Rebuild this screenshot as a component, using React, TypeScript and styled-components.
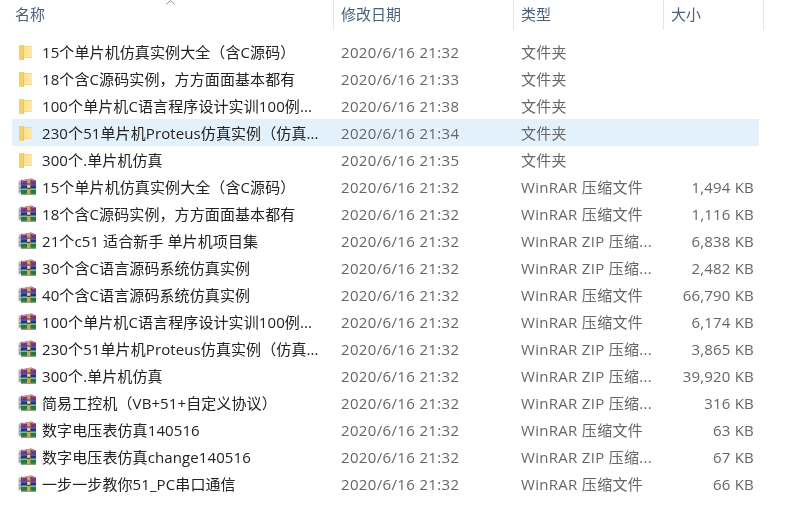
import React from "react";
import styled, { createGlobalStyle } from "styled-components";

const GlobalStyle = createGlobalStyle`
  html, body {
    margin: 0;
    background: #fff;
  }
  body {
    font-family: "Open Sans", "Noto Sans CJK SC", sans-serif;
    font-size: 15px;
    color: #666;
  }
`;

const Wrapper = styled.div`
  width: 803px;
  height: 510px;
  overflow: hidden;
  filter: blur(0.3px);
`;

const Header = styled.div`
  position: relative;
  display: flex;
  height: 30px;
  margin-bottom: 8px;
`;

const HeaderCell = styled.div<{ $width: number; $pad: number }>`
  width: ${(p) => p.$width}px;
  box-sizing: border-box;
  padding-left: ${(p) => p.$pad}px;
  border-right: 1px solid #e5e5e5;
  font-size: 15px;
  line-height: 28px;
  color: #4c607a;
`;

const SortArrow = styled.svg`
  position: absolute;
  left: 165px;
  top: 0;
`;

const Row = styled.div<{ $selected?: boolean }>`
  display: grid;
  grid-template-columns: 321px 180px 150px 96px;
  width: 747px;
  height: 27px;
  margin-left: 12px;
  align-items: center;
  background: ${(p) => (p.$selected ? "#e3f1fc" : "transparent")};
`;

const NameCell = styled.div`
  display: flex;
  align-items: center;
  min-width: 0;
  padding-left: 6px;
`;

const IconSlot = styled.div`
  display: flex;
  width: 24px;
  flex: none;
`;

const Name = styled.span`
  color: #222;
  letter-spacing: 0.1px;
  white-space: nowrap;
`;

const DateCell = styled.div`
  padding-left: 8px;
  letter-spacing: 0.35px;
  white-space: nowrap;
`;

const TypeCell = styled.div`
  padding-left: 8px;
  letter-spacing: 0.3px;
  white-space: nowrap;
`;

const SizeCell = styled.div`
  padding-right: 5px;
  letter-spacing: 0.2px;
  text-align: right;
  white-space: nowrap;
`;

const FolderIcon = () => (
  <svg width="16" height="18" viewBox="0 0 16 18">
    <defs>
      <linearGradient id="folderFront" x1="0" y1="0" x2="1" y2="0">
        <stop offset="0" stopColor="#fbe08c" />
        <stop offset="1" stopColor="#fdeaa8" />
      </linearGradient>
    </defs>
    <path d="M1 2 L6 2 L7 3 L14 3 L14 15 L6 15 L6 17 L2 17 Q1 17 1 16 Z" fill="#f4cf6a" />
    <path d="M5 3.5 L14 3.5 L14 14.5 L7 14.5 L5 16.8 Z" fill="url(#folderFront)" />
    <path d="M5 3.5 L5.8 3.5 L5.8 15.8 L5 16.8 Z" fill="#e9bd55" />
  </svg>
);

const RarIcon = () => (
  <svg width="19" height="17" viewBox="0 0 19 17">
    <path d="M0.5 3 L5 1 L5 15 L0.5 15.5 Z" fill="#b9bcc2" />
    <path d="M1 6 L5 6 M1 10 L5 10 M1 13 L5 13" stroke="#6e7178" strokeWidth="0.8" />
    <path d="M3 2.5 L13 0.5 L18 2.5 L18 6 L3 6 Z" fill="#84326f" />
    <path d="M4 3 L13 1.3 L16.5 2.8" stroke="#d59ac8" strokeWidth="0.9" fill="none" />
    <rect x="3" y="6" width="15" height="4.5" fill="#1f2f92" />
    <path d="M3 7 L18 7" stroke="#6f86df" strokeWidth="0.9" />
    <rect x="3" y="10.5" width="15" height="5" fill="#1f7d34" />
    <path d="M3 11.5 L18 11.5" stroke="#7fcf80" strokeWidth="0.9" />
    <path d="M3 16 L18 16" stroke="#153a1c" strokeWidth="1" />
    <rect x="9" y="1" width="3.5" height="15.5" fill="#c6a469" />
    <path d="M9 6 L12.5 6 M9 10.5 L12.5 10.5" stroke="#5d4528" strokeWidth="1" />
    <rect x="9.8" y="7.3" width="1.9" height="1.9" fill="#f0e6ca" />
  </svg>
);

type FileRow = {
  name: string;
  time: string;
  type: string;
  size?: string;
  folder?: boolean;
  selected?: boolean;
};

const files: FileRow[] = [
  { name: "15个单片机仿真实例大全（含C源码）", time: "21:32", type: "文件夹", folder: true },
  { name: "18个含C源码实例，方方面面基本都有", time: "21:33", type: "文件夹", folder: true },
  { name: "100个单片机C语言程序设计实训100例...", time: "21:38", type: "文件夹", folder: true },
  { name: "230个51单片机Proteus仿真实例（仿真...", time: "21:34", type: "文件夹", folder: true, selected: true },
  { name: "300个.单片机仿真", time: "21:35", type: "文件夹", folder: true },
  { name: "15个单片机仿真实例大全（含C源码）", time: "21:32", type: "WinRAR 压缩文件", size: "1,494 KB" },
  { name: "18个含C源码实例，方方面面基本都有", time: "21:32", type: "WinRAR 压缩文件", size: "1,116 KB" },
  { name: "21个c51 适合新手 单片机项目集", time: "21:32", type: "WinRAR ZIP 压缩...", size: "6,838 KB" },
  { name: "30个含C语言源码系统仿真实例", time: "21:32", type: "WinRAR ZIP 压缩...", size: "2,482 KB" },
  { name: "40个含C语言源码系统仿真实例", time: "21:32", type: "WinRAR 压缩文件", size: "66,790 KB" },
  { name: "100个单片机C语言程序设计实训100例...", time: "21:32", type: "WinRAR 压缩文件", size: "6,174 KB" },
  { name: "230个51单片机Proteus仿真实例（仿真...", time: "21:32", type: "WinRAR ZIP 压缩...", size: "3,865 KB" },
  { name: "300个.单片机仿真", time: "21:32", type: "WinRAR ZIP 压缩...", size: "39,920 KB" },
  { name: "简易工控机（VB+51+自定义协议）", time: "21:32", type: "WinRAR ZIP 压缩...", size: "316 KB" },
  { name: "数字电压表仿真140516", time: "21:32", type: "WinRAR 压缩文件", size: "63 KB" },
  { name: "数字电压表仿真change140516", time: "21:32", type: "WinRAR ZIP 压缩...", size: "67 KB" },
  { name: "一步一步教你51_PC串口通信", time: "21:32", type: "WinRAR 压缩文件", size: "66 KB" },
];

const App = () => {
  return (
    <Wrapper>
      <GlobalStyle />
      <Header>
        <HeaderCell $width={334} $pad={15}>名称</HeaderCell>
        <HeaderCell $width={180} $pad={7}>修改日期</HeaderCell>
        <HeaderCell $width={150} $pad={7}>类型</HeaderCell>
        <HeaderCell $width={100} $pad={7}>大小</HeaderCell>
        <SortArrow width="12" height="5" viewBox="0 0 12 5">
          <path d="M1 4.5 L5.5 0.5 L10 4.5" stroke="#8a8f96" fill="none" />
        </SortArrow>
      </Header>
      {files.map((f, i) => (
        <Row key={i} $selected={f.selected}>
          <NameCell>
            <IconSlot>{f.folder ? <FolderIcon /> : <RarIcon />}</IconSlot>
            <Name>{f.name}</Name>
          </NameCell>
          <DateCell>2020/6/16 {f.time}</DateCell>
          <TypeCell>{f.type}</TypeCell>
          <SizeCell>{f.size}</SizeCell>
        </Row>
      ))}
    </Wrapper>
  );
};

export default App;
